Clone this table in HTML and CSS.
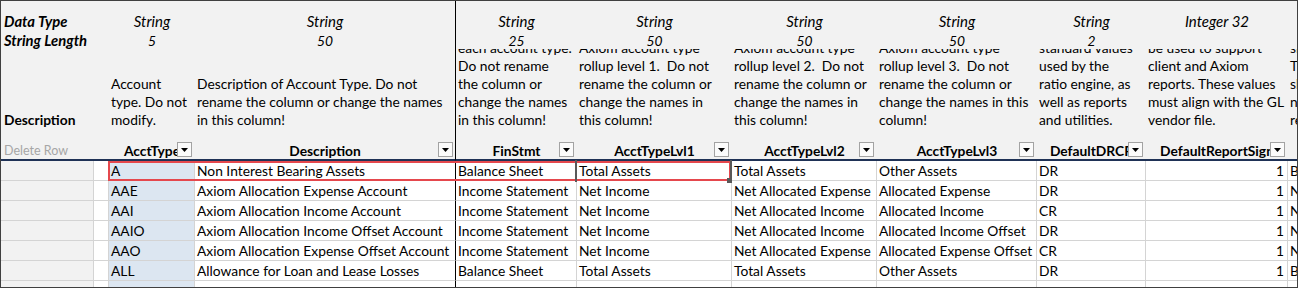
FILE: index.html
```html
<!DOCTYPE html>
<html>
<head>
<meta charset="utf-8">
<link rel="stylesheet" href="styles.css">
</head>
<body>
<div class="sheet">
  <div class="cols head">
    <!-- row 1 -->
    <div class="t1 lbl">Data Type</div>
    <div class="t1"></div>
    <div class="t1">String</div>
    <div class="t1 fz">String</div>
    <div class="t1">String</div>
    <div class="t1">String</div>
    <div class="t1">String</div>
    <div class="t1">String</div>
    <div class="t1">String</div>
    <div class="t1">Integer 32</div>
    <div class="t1"></div>
    <!-- row 2 -->
    <div class="t2 lbl">String Length</div>
    <div class="t2"></div>
    <div class="t2">5</div>
    <div class="t2 fz">50</div>
    <div class="t2">25</div>
    <div class="t2">50</div>
    <div class="t2">50</div>
    <div class="t2">50</div>
    <div class="t2">2</div>
    <div class="t2"></div>
    <div class="t2"></div>
    <!-- row 3 -->
    <div class="t3 lbl3"><span class="ln">Description</span></div>
    <div class="t3"></div>
    <div class="t3"><span class="ln">Account</span><span class="ln">type. Do not</span><span class="ln">modify.</span></div>
    <div class="t3 fz"><span class="ln">Description of Account Type. Do not</span><span class="ln">rename the column or change the names</span><span class="ln">in this column!</span></div>
    <div class="t3"><span class="ln">Financial statement for</span><span class="ln">each account type.</span><span class="ln">Do not rename</span><span class="ln">the column or</span><span class="ln">change the names</span><span class="ln">in this column!</span></div>
    <div class="t3"><span class="ln">Axiom account type</span><span class="ln">rollup level 1.  Do not</span><span class="ln">rename the column or</span><span class="ln">change the names in</span><span class="ln">this column!</span></div>
    <div class="t3"><span class="ln">Axiom account type</span><span class="ln">rollup level 2.  Do not</span><span class="ln">rename the column or</span><span class="ln">change the names in</span><span class="ln">this column!</span></div>
    <div class="t3"><span class="ln">Axiom account type</span><span class="ln">rollup level 3.  Do not</span><span class="ln">rename the column or</span><span class="ln">change the names in this</span><span class="ln">column!</span></div>
    <div class="t3"><span class="ln">Debit or credit. These are</span><span class="ln">standard values</span><span class="ln">used by the</span><span class="ln">ratio engine, as</span><span class="ln">well as reports</span><span class="ln">and utilities.</span></div>
    <div class="t3"><span class="ln">The report sign that will</span><span class="ln">be used to support</span><span class="ln">client and Axiom</span><span class="ln">reports. These values</span><span class="ln">must align with the GL</span><span class="ln">vendor file.</span></div>
    <div class="t3 edge"><span class="ln">sign</span><span class="ln">The</span><span class="ln">should</span><span class="ln">need</span><span class="ln">reports</span></div>
    <!-- row 4: column headers -->
    <div class="t4 del">Delete Row</div>
    <div class="t4"></div>
    <div class="t4">AcctType<span class="flt"><svg width="7" height="4" viewBox="0 0 7 4"><polygon points="0,0 7,0 3.5,4"/></svg></span></div>
    <div class="t4 fz">Description<span class="flt fzb"><svg width="7" height="4" viewBox="0 0 7 4"><polygon points="0,0 7,0 3.5,4"/></svg></span></div>
    <div class="t4">FinStmt<span class="flt"><svg width="7" height="4" viewBox="0 0 7 4"><polygon points="0,0 7,0 3.5,4"/></svg></span></div>
    <div class="t4">AcctTypeLvl1<span class="flt"><svg width="7" height="4" viewBox="0 0 7 4"><polygon points="0,0 7,0 3.5,4"/></svg></span></div>
    <div class="t4">AcctTypeLvl2<span class="flt"><svg width="7" height="4" viewBox="0 0 7 4"><polygon points="0,0 7,0 3.5,4"/></svg></span></div>
    <div class="t4">AcctTypeLvl3<span class="flt"><svg width="7" height="4" viewBox="0 0 7 4"><polygon points="0,0 7,0 3.5,4"/></svg></span></div>
    <div class="t4">DefaultDRCR<span class="flt"><svg width="7" height="4" viewBox="0 0 7 4"><polygon points="0,0 7,0 3.5,4"/></svg></span></div>
    <div class="t4">DefaultReportSign<span class="flt"><svg width="7" height="4" viewBox="0 0 7 4"><polygon points="0,0 7,0 3.5,4"/></svg></span></div>
    <div class="t4"></div>
  </div>

  <div class="cols body">
    <div class="d ca"></div><div class="d"></div><div class="d cc">A</div><div class="d fz">Non Interest Bearing Assets</div><div class="d">Balance Sheet</div><div class="d">Total Assets</div><div class="d">Total Assets</div><div class="d">Other Assets</div><div class="d">DR</div><div class="d num">1</div><div class="d edge">Balance Sheet</div>

    <div class="d ca"></div><div class="d"></div><div class="d cc">AAE</div><div class="d fz">Axiom Allocation Expense Account</div><div class="d">Income Statement</div><div class="d">Net Income</div><div class="d">Net Allocated Expense</div><div class="d">Allocated Expense</div><div class="d">DR</div><div class="d num">1</div><div class="d edge">Net Income</div>

    <div class="d ca"></div><div class="d"></div><div class="d cc">AAI</div><div class="d fz">Axiom Allocation Income Account</div><div class="d">Income Statement</div><div class="d">Net Income</div><div class="d">Net Allocated Income</div><div class="d">Allocated Income</div><div class="d">CR</div><div class="d num">1</div><div class="d edge">Net Income</div>

    <div class="d ca"></div><div class="d"></div><div class="d cc">AAIO</div><div class="d fz">Axiom Allocation Income Offset Account</div><div class="d">Income Statement</div><div class="d">Net Income</div><div class="d">Net Allocated Income</div><div class="d">Allocated Income Offset</div><div class="d">DR</div><div class="d num">1</div><div class="d edge">Net Income</div>

    <div class="d ca"></div><div class="d"></div><div class="d cc">AAO</div><div class="d fz">Axiom Allocation Expense Offset Account</div><div class="d">Income Statement</div><div class="d">Net Income</div><div class="d">Net Allocated Expense</div><div class="d">Allocated Expense Offset</div><div class="d">CR</div><div class="d num">1</div><div class="d edge">Net Income</div>

    <div class="d ca"></div><div class="d"></div><div class="d cc">ALL</div><div class="d fz">Allowance for Loan and Lease Losses</div><div class="d">Balance Sheet</div><div class="d">Total Assets</div><div class="d">Total Assets</div><div class="d">Other Assets</div><div class="d">DR</div><div class="d num">1</div><div class="d edge">Balance Sheet</div>

    <div class="p ca"></div><div class="p"></div><div class="p cc">AOCI</div><div class="p fz">Accumulated Other Comprehensive</div><div class="p">Balance Sheet</div><div class="p">Total Liabilities</div><div class="p">Total Equity</div><div class="p">Other Equity</div><div class="p">CR</div><div class="p num">1</div><div class="p edge">Balance Sheet</div>
  </div>

  <div class="redbox"></div>
  <div class="selection"></div>
  <div class="handle"></div>
</div>
</body>
</html>
```

FILE: styles.css
```css
html, body {
  margin: 0;
  padding: 0;
  background: #ffffff;
}

body {
  font-family: Lato, "Liberation Sans", "Noto Sans", sans-serif;
  font-size: 13.8px;
  color: #000000;
}

.sheet {
  position: relative;
  width: 1298px;
  height: 288px;
  box-sizing: border-box;
  border: 1px solid #404040;
  overflow: hidden;
  background: #ffffff;
}

.cols {
  display: grid;
  grid-template-columns: 93px 15px 86px 261px 121px 155px 145px 160px 109px 142px 9px;
}

.cols > div {
  box-sizing: border-box;
  white-space: nowrap;
  min-width: 0;
}

.head {
  background: #f2f2f2;
  grid-template-rows: 29px 19px 83px 29px;
}

.body {
  grid-template-rows: repeat(6, 20px) 6px;
}

/* frozen pane divider */
.fz {
  border-right: 1px solid #000000;
}

/* row 1: data type */
.t1 {
  padding-top: 11px;
  line-height: 18px;
  text-align: center;
  font-style: italic;
  font-size: 15px;
}

/* row 2: string length */
.t2 {
  padding-top: 2px;
  line-height: 17px;
  text-align: center;
  font-style: italic;
}

.lbl {
  text-align: left;
  padding-left: 3px;
  font-weight: bold;
  font-size: 14.8px;
}

/* row 3: descriptions (bottom aligned, clipped at top) */
.t3 {
  display: flex;
  flex-direction: column;
  justify-content: flex-end;
  overflow: hidden;
  padding: 0 0 3px 2px;
  line-height: 18px;
}

.t3 .ln {
  display: block;
  white-space: pre;
  flex: none;
}

.lbl3 {
  padding-left: 3px;
  font-weight: bold;
}

.t3.edge {
  padding-left: 2px;
}

/* row 4: table headers */
.t4 {
  position: relative;
  overflow: hidden;
  padding-top: 11px;
  line-height: 16px;
  text-align: center;
  font-weight: bold;
  border-bottom: 2px solid #1f3256;
}

.t4.del {
  text-align: left;
  padding-left: 3px;
  font-weight: normal;
  font-size: 12.5px;
  color: #a6a6a6;
}

.flt {
  position: absolute;
  right: 3px;
  bottom: 2px;
  width: 15px;
  height: 15px;
  box-sizing: border-box;
  border: 1px solid #a3a3a3;
  background: #fbfbfb;
  display: flex;
  align-items: center;
  justify-content: center;
}

.flt.fzb {
  right: 2px;
}

.flt svg {
  display: block;
  fill: #000000;
  margin-top: 1px;
}

/* data cells */
.d {
  border-right: 1px solid #d4d4d4;
  border-bottom: 1px solid #d4d4d4;
  padding: 1px 3px 0 2px;
  line-height: 18px;
  overflow: hidden;
}

.d.fz,
.p.fz {
  border-right: 1px solid #000000;
}

.d.edge {
  border-right: none;
  padding-left: 2px;
}

.p {
  border-right: 1px solid #d4d4d4;
  padding: 2px 3px 0 2px;
  line-height: 18px;
  overflow: hidden;
}

.p.edge {
  border-right: none;
  padding-left: 2px;
}

.ca {
  background: #f2f2f2;
}

.cc {
  background: #dce6f1;
}

.num {
  text-align: right;
}

/* overlays: highlight box and active cell */
.redbox {
  position: absolute;
  left: 107px;
  top: 160px;
  width: 623px;
  height: 20px;
  box-sizing: border-box;
  border: 2px solid #e5484d;
}

.selection {
  position: absolute;
  left: 574px;
  top: 159px;
  width: 157px;
  height: 22px;
  box-sizing: border-box;
  border-left: 2px solid #595959;
  border-right: 2px solid #595959;
}

.handle {
  position: absolute;
  left: 726px;
  top: 177px;
  width: 5px;
  height: 5px;
  background: #595959;
}
```
